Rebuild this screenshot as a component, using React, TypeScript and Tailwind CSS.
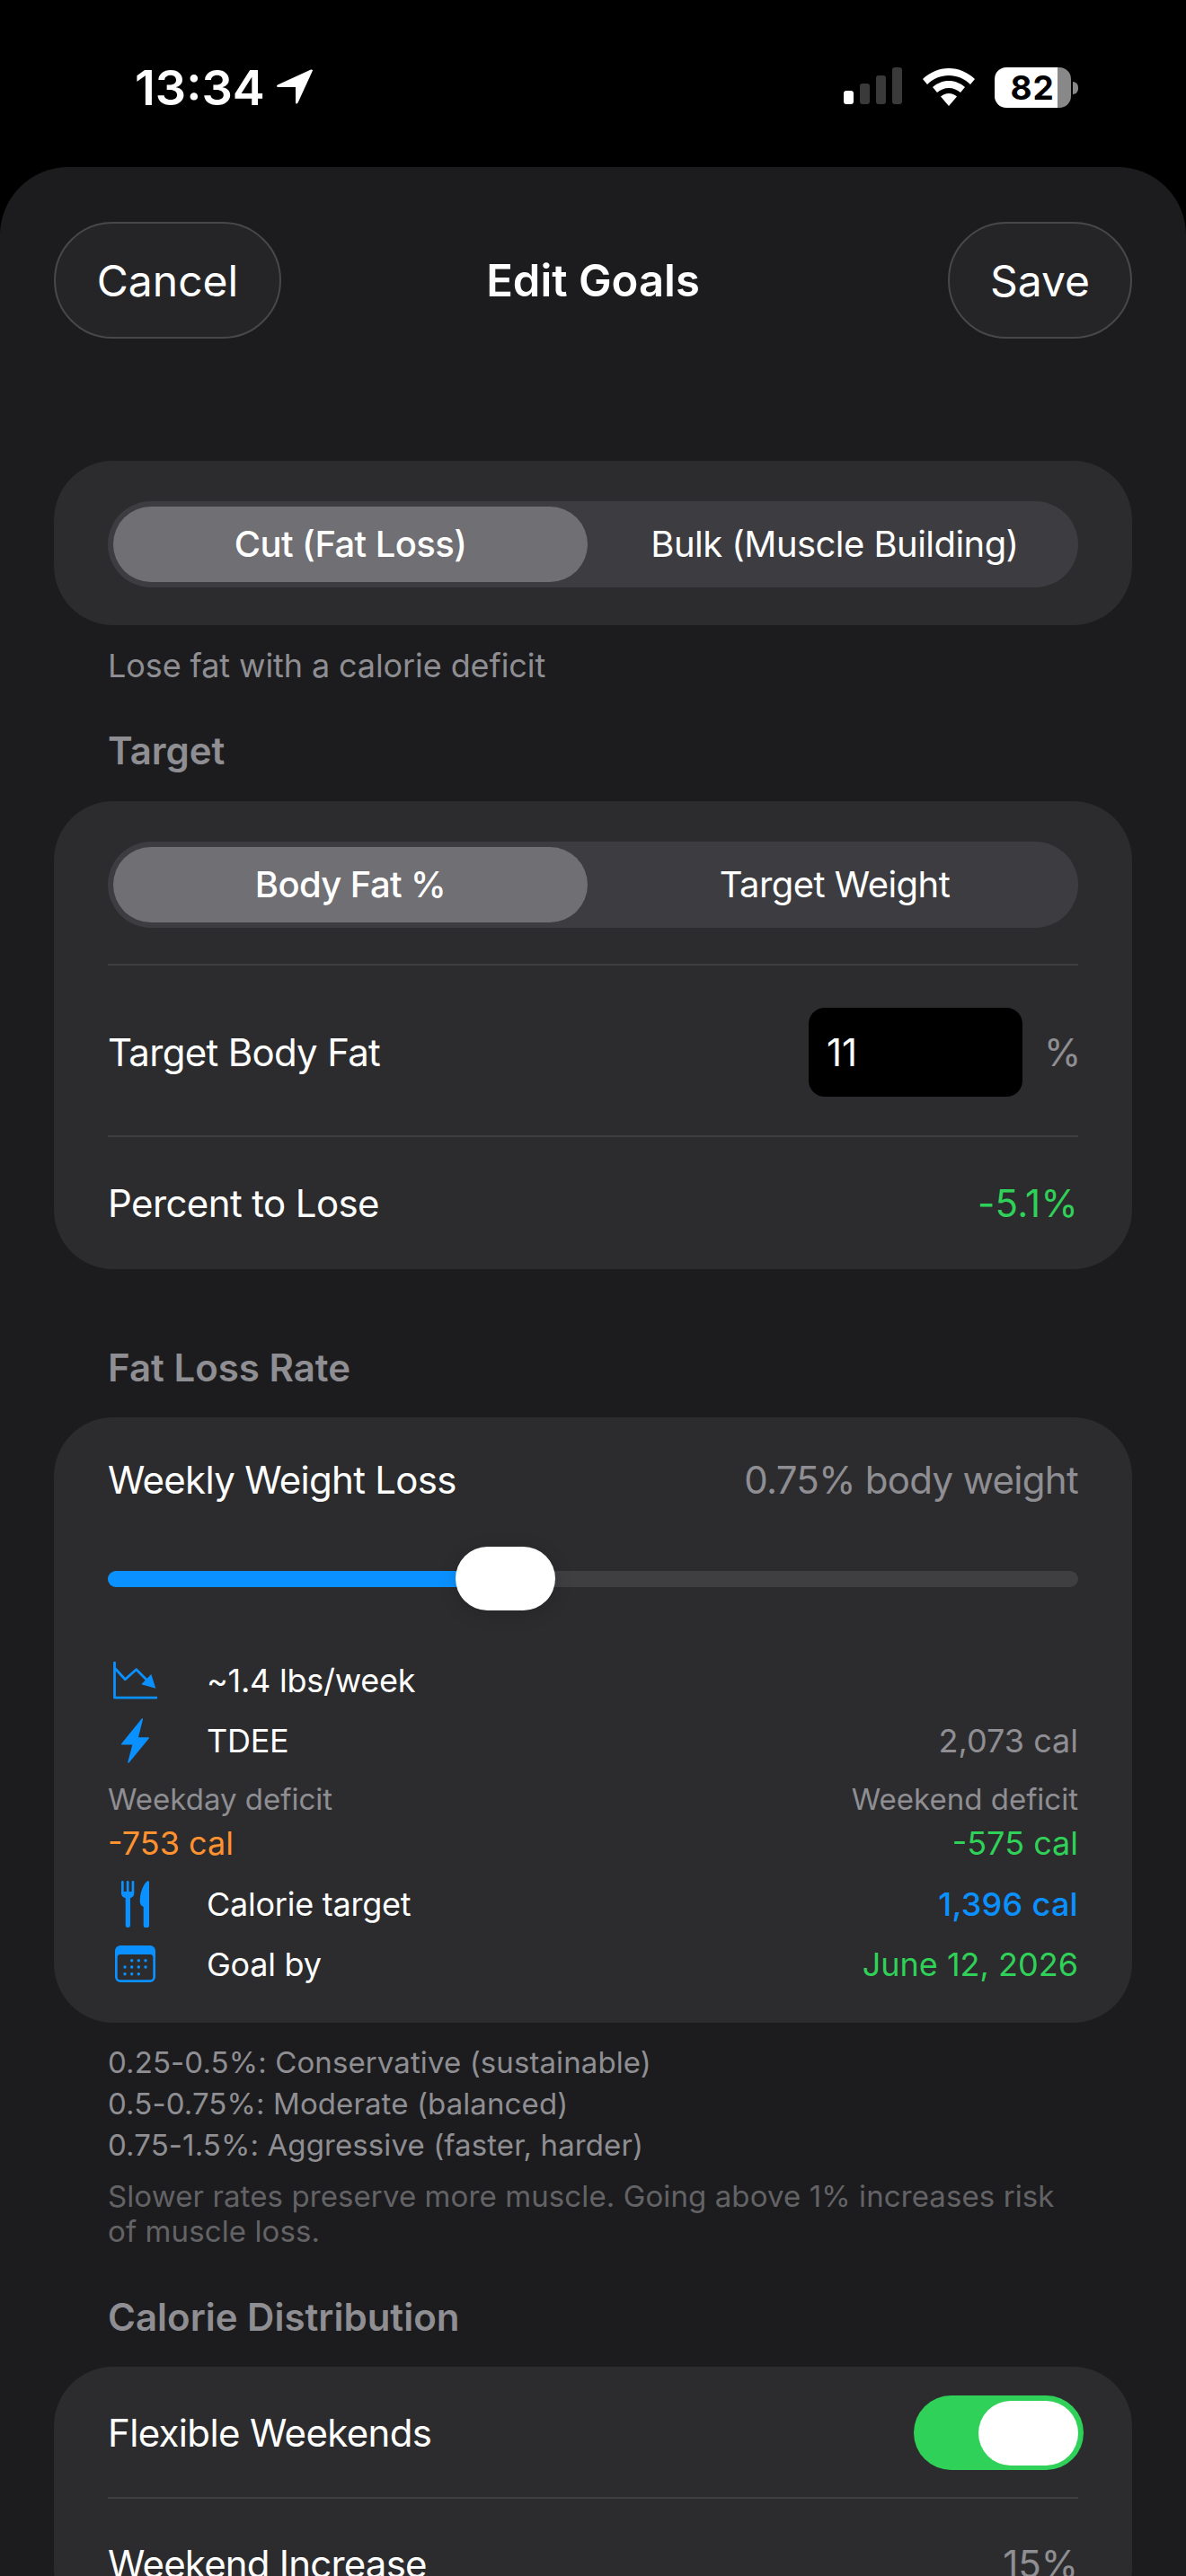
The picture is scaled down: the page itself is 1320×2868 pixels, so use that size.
import React from "react";

function Seg({ a, b }: { a: string; b: string }) {
  return (
    <div className="flex h-[96px] items-stretch rounded-full bg-[#3d3d41] p-[6px] text-[40px] leading-none text-white">
      <div className="flex w-[528px] items-center justify-center rounded-full bg-[#6f6f74] font-medium tracking-[-0.6px]">{a}</div>
      <div className="flex flex-1 items-center justify-center pl-[10px] tracking-[-0.55px]">{b}</div>
    </div>
  );
}

function Label({ children }: { children: React.ReactNode }) {
  return <div className="px-[60px] text-[42px] font-semibold leading-[52px] text-[#8e8e93]">{children}</div>;
}

function Divider() {
  return <div className="h-[2px] bg-[#3f3f42]" />;
}

function ChartIcon() {
  return (
    <svg width="49" height="42" viewBox="0 0 49 42" fill="none" className="block">
      <path d="M1.500 1v39.200H48" stroke="#0a91ff" strokeWidth="2.800" strokeLinecap="round" strokeLinejoin="round" />
      <path d="M2 7.500 13.300 19.700 25.700 8.700 38 21" stroke="#0a91ff" strokeWidth="2.800" strokeLinejoin="round" />
      <path d="M42.300 14 47.300 29.700 31.300 25.300z" fill="#0a91ff" />
    </svg>
  );
}

function BoltIcon() {
  return (
    <svg width="31" height="50" viewBox="0 0 31 50" className="block">
      <path d="M23.300 1 .8 28.800H13.300L8 49 30.200 22H18z" fill="#0a91ff" stroke="#0a91ff" strokeWidth="1.500" strokeLinejoin="round" />
    </svg>
  );
}

function ForkIcon() {
  return (
    <svg width="31" height="52" viewBox="0 0 31 52" className="block">
      <path d="M0 1.300a1.300 1.300 0 0 1 2.700 0V12H5.800V1.300a1.300 1.300 0 0 1 2.700 0V12h3.100V1.300a1.300 1.300 0 0 1 2.700 0V14c0 3-2 4.500-4.300 5.300V49.400a2.650 2.650 0 0 1-5.300 0V19.300C2 18.500 0 17 0 14z" fill="#0a91ff" />
      <path d="M29.600 0c.9 0 1.400.7 1.400 1.500v47.900a3.100 3.100 0 0 1-6.300 0V29c-2.500-1-4-3.200-4-6C20.700 14 24 3.500 29.600 0z" fill="#0a91ff" />
    </svg>
  );
}

function CalendarIcon() {
  const dots: [number, number][] = [
    [18.7, 16.7], [26.300, 16.7], [34, 16.7],
    [11, 24], [18.7, 24], [26.300, 24], [34, 24],
    [11, 31.700], [18.7, 31.700], [26.300, 31.700],
  ];
  return (
    <svg width="45" height="41" viewBox="0 0 45 41" className="block">
      <path fillRule="evenodd" d="M6 0h33a6 6 0 0 1 6 6v29a6 6 0 0 1-6 6H6a6 6 0 0 1-6-6V6a6 6 0 0 1 6-6zM6 10a3.300 3.300 0 0 0-3.300 3.300v21.700a3.300 3.300 0 0 0 3.300 3.300h33a3.300 3.300 0 0 0 3.300-3.300V13.300A3.300 3.300 0 0 0 39 10z" fill="#0a91ff" />
      {dots.map(([x, y]) => (
        <circle key={`${x}-${y}`} cx={x} cy={y} r="1.700" fill="#0a91ff" />
      ))}
    </svg>
  );
}

function IconRow({ icon, label, right, rightClass }: { icon: React.ReactNode; label: string; right?: string; rightClass?: string }) {
  return (
    <div className="flex h-[67px] items-center text-[36px] leading-none">
      <div className="w-[110px]">
        <div className="flex w-[60px] justify-center">{icon}</div>
      </div>
      <div className="tracking-[-0.25px] text-white">{label}</div>
      {right && <div className={`ml-auto ${rightClass}`}>{right}</div>}
    </div>
  );
}

export default function App() {
  return (
    <div className="h-[2868px] w-[1320px] overflow-hidden bg-black font-['Inter',sans-serif]">
      <div className="flex h-[186px] items-start pt-[75px] text-white">
        <div className="ml-[150px] text-[54px] font-semibold leading-[45px]">13:34</div>
        <svg width="42" height="40" viewBox="0 0 42 42" preserveAspectRatio="none" className="ml-[12px] mt-[2px]">
          <path d="M41 1.500 24.500 39.500c-.6 1.300-2.500 1-2.500-.5V21H2.500c-1.600 0-2-2-.6-2.700L39 .6c1.300-.6 2.600.6 2 .9z" fill="#fff" />
        </svg>
        <div className="ml-[590px] flex items-end gap-[7px]">
          <div className="h-[15px] w-[11px] rounded-[3px] bg-white" />
          <div className="h-[23px] w-[11px] rounded-[3px] bg-[#3a3a3a]" />
          <div className="h-[32px] w-[11px] rounded-[3px] bg-[#3a3a3a]" />
          <div className="h-[41px] w-[11px] rounded-[3px] bg-[#3a3a3a]" />
        </div>
        <svg width="58" height="42" viewBox="0 0 58 42" className="ml-[23px] mt-[1px]">
          <path d="M29 0c11 0 21 4.500 29 12l-5 6C46.500 11.500 38 8 29 8S11.500 11.500 5 18l-5-6C8 4.500 18 0 29 0z" fill="#fff" />
          <path d="M29 14c7 0 13 2.700 18 7l-5 6c-3.500-3-8-5-13-5s-9.500 2-13 5l-5-6c5-4.300 11-7 18-7z" fill="#fff" />
          <path d="M29 28c3.500 0 6.500 1.300 9 3.500L29 42l-9-10.500c2.500-2.200 5.500-3.500 9-3.500z" fill="#fff" />
        </svg>
        <div className="ml-[22px] flex items-center">
          <div className="flex h-[45px] w-[85px] items-center justify-center rounded-[13px] bg-[linear-gradient(90deg,#fff_82%,#888_82%)] text-[37px] font-bold leading-none tracking-[1px] text-black">82</div>
          <div className="ml-[2px] h-[14px] w-[6px] rounded-r-full bg-[#888]" />
        </div>
      </div>

      <div className="h-[2682px] rounded-t-[76px] bg-[#1c1c1e]">
        <div className="grid grid-cols-[1fr_auto_1fr] items-center px-[60px] pt-[61px]">
          <div className="flex h-[130px] w-[253px] items-center justify-center rounded-full border-2 border-[#48484a] bg-[#252527] pt-[2px] text-[48px] text-white">Cancel</div>
          <div className="pt-[2px] text-[49px] font-semibold text-white">Edit Goals</div>
          <div className="flex h-[130px] w-[205px] items-center justify-center justify-self-end rounded-full border-2 border-[#48484a] bg-[#252527] pt-[2px] text-[48px] text-white">Save</div>
        </div>

        <div className="mx-[60px] mt-[136px] rounded-[66px] bg-[#2c2c2e] px-[60px] pb-[42px] pt-[45px]">
          <Seg a="Cut (Fat Loss)" b="Bulk (Muscle Building)" />
        </div>
        <div className="mt-[21px] px-[120px] text-[36px] leading-[48px] tracking-[-0.1px] text-[#8e8e93]">Lose fat with a calorie deficit</div>
        <div className="mt-[45px] pl-[60px]">
          <Label>Target</Label>
        </div>

        <div className="mx-[60px] mt-[30px] rounded-[66px] bg-[#2c2c2e] px-[60px] pt-[45px]">
          <Seg a="Body Fat %" b="Target Weight" />
          <div className="mt-[40px]"><Divider /></div>
          <div className="flex h-[189px] items-center pt-[3px] text-[42px] text-white">
            <div className="tracking-[-0.7px]">Target Body Fat</div>
            <div className="ml-auto flex h-[99px] w-[238px] items-center rounded-[18px] bg-black px-[20px]">11</div>
            <div className="ml-[24px] w-[38px] text-right text-[#8e8e93]">%</div>
          </div>
          <Divider />
          <div className="flex h-[147px] items-center text-[42px]">
            <div className="tracking-[-0.6px] text-white">Percent to Lose</div>
            <div className="ml-auto tracking-[0.3px] text-[#30d158]">-5.1%</div>
          </div>
        </div>

        <div className="mt-[84px] pl-[60px]">
          <Label>Fat Loss Rate</Label>
        </div>

        <div className="mx-[60px] mt-[29px] rounded-[66px] bg-[#2c2c2e] px-[60px] pb-[32px] pt-[40px]">
          <div className="flex items-center justify-between text-[42px] leading-[60px] tracking-[-0.7px]">
            <div className="text-white">Weekly Weight Loss</div>
            <div className="text-[#8e8e93]">0.75% body weight</div>
          </div>
          <div className="relative mt-[44px] flex h-[71px] items-center">
            <div className="flex h-[18px] w-full overflow-hidden rounded-full bg-[#3f3f42]">
              <div className="w-[390px] bg-[#0a91ff]" />
            </div>
            <div className="absolute left-[387px] top-0 h-[71px] w-[111px] rounded-full bg-white shadow-[0_4px_20px_rgba(0,0,0,0.15)]" />
          </div>
          <div className="mt-[44px]">
            <IconRow icon={<ChartIcon />} label="~1.4 lbs/week" />
            <IconRow icon={<BoltIcon />} label="TDEE" right="2,073 cal" rightClass="text-[#8e8e93]" />
            <div className="mt-[8px] flex justify-between text-[33px] leading-[48px] text-[#8e8e93]">
              <div>Weekday deficit</div>
              <div>Weekend deficit</div>
            </div>
            <div className="mt-[1px] flex justify-between text-[36px] leading-[48px]">
              <div className="text-[#ff9230]">-753 cal</div>
              <div className="text-[#30d158]">-575 cal</div>
            </div>
            <div className="mt-[10px]">
              <IconRow icon={<ForkIcon />} label="Calorie target" right="1,396 cal" rightClass="font-medium tracking-[0.3px] text-[#0a91ff]" />
            </div>
            <IconRow icon={<CalendarIcon />} label="Goal by" right="June 12, 2026" rightClass="text-[#30d158]" />
          </div>
        </div>

        <div className="mt-[21px] px-[120px] text-[33px] leading-[46px] tracking-[0.1px] text-[#8e8e93]">
          <div>0.25-0.5%: Conservative (sustainable)</div>
          <div>0.5-0.75%: Moderate (balanced)</div>
          <div>0.75-1.5%: Aggressive (faster, harder)</div>
        </div>
        <div className="mt-[15px] px-[120px] text-[33px] leading-[39px] tracking-[0.1px] text-[#636366]">
          Slower rates preserve more muscle. Going above 1% increases risk of muscle loss.
        </div>

        <div className="mt-[50px] pl-[60px]">
          <Label>Calorie Distribution</Label>
        </div>

        <div className="mx-[60px] mt-[29px] rounded-[66px] bg-[#2c2c2e] px-[60px] pt-[32px]">
          <div className="flex items-center pb-[30px]">
            <div className="text-[42px] tracking-[-0.65px] text-white">Flexible Weekends</div>
            <div className="-mr-[6px] ml-auto flex h-[83px] w-[189px] items-center justify-end rounded-full bg-[#30d158] pr-[6px]">
              <div className="h-[72px] w-[111px] rounded-full bg-white" />
            </div>
          </div>
          <Divider />
          <div className="flex h-[145px] items-center text-[42px]">
            <div className="tracking-[-0.8px] text-white">Weekend Increase</div>
            <div className="ml-auto text-[#8e8e93]">15%</div>
          </div>
        </div>
      </div>
    </div>
  );
}
